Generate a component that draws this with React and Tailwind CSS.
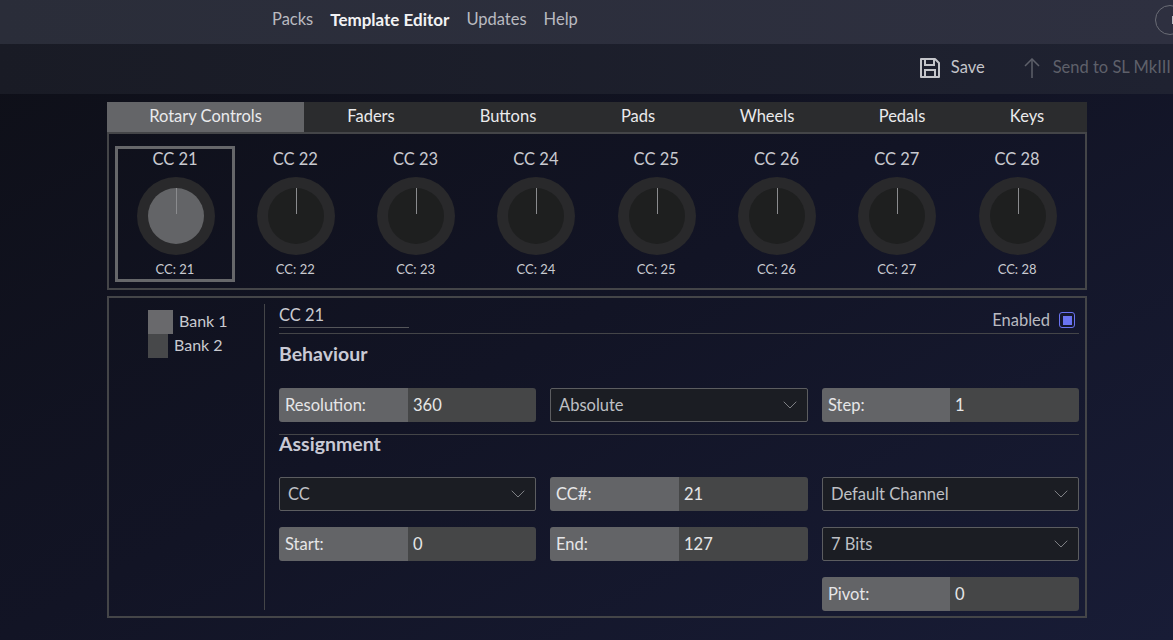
import { ChevronDown } from "lucide-react";

const tabs = [
  ["Rotary Controls", "w-[197px] bg-[#646568]"],
  ["Faders", "w-[134px]"],
  ["Buttons", "w-[140px]"],
  ["Pads", "w-[120px]"],
  ["Wheels", "w-[138px]"],
  ["Pedals", "w-[132px]"],
  ["Keys", "w-[118px]"],
];

const knobs = [21, 22, 23, 24, 25, 26, 27, 28];

function SaveIcon() {
  return (
    <svg width="20" height="20" viewBox="0 0 20 20" fill="none" stroke="#c4c5ca" strokeWidth="2">
      <path d="M1 1h14l4 4v14H1z" strokeLinejoin="round" />
      <path d="M5 1v6h9V1" />
      <path d="M5 19v-7h10v7" />
    </svg>
  );
}

function SendIcon() {
  return (
    <svg width="16" height="20" viewBox="0 0 16 20" fill="none" stroke="#5e606a" strokeWidth="1.5">
      <path d="M8 20V1" />
      <path d="M1 8l7-7 7 7" />
    </svg>
  );
}

function Knob({ cc, selected }) {
  return (
    <div
      className={
        "w-[120px] h-[136px] flex flex-col items-center border-[3px] " +
        (selected ? "border-[#66676a]" : "border-transparent")
      }
    >
      <div className="text-[16.5px] leading-5 text-[#c9cad0]">CC {cc}</div>
      <div className="mt-[8px] ml-[1px] w-[78px] h-[78px] rounded-full bg-[#29292b] flex items-center justify-center">
        <div
          className={
            "relative w-[56px] h-[56px] rounded-full " + (selected ? "bg-[#636467]" : "bg-[#1e1f1f]")
          }
        >
          <div className="absolute left-[28px] top-0 w-[1px] h-[26px] bg-[#8a8b8e]" />
        </div>
      </div>
      <div className="text-[13px] leading-4 mt-[6px] text-[#c9cad0]">CC: {cc}</div>
    </div>
  );
}

function Field({ label, value, labelWidth = "w-[129px]" }) {
  return (
    <div className="w-full h-[34px] flex rounded-[3px] overflow-hidden text-[16.5px] leading-[34px] text-[#e6e6e8]">
      <div className={labelWidth + " bg-[#636467] pl-[6px]"}>{label}</div>
      <div className="flex-1 bg-[#454647] pl-[5px]">{value}</div>
    </div>
  );
}

function Select({ value }) {
  return (
    <div className="w-full h-[34px] flex items-center justify-between pl-2 pr-[5px] rounded-[2px] border border-[#5c5d60] bg-[#1b1d23] text-[16.5px] text-[#bfc0c5]">
      <span>{value}</span>
      <ChevronDown size={24} strokeWidth={0.9} color="#8a8b90" />
    </div>
  );
}

export default function App() {
  return (
    <div className="w-[1173px] h-[640px] overflow-hidden bg-gradient-to-br from-[#0e0f17] via-[#121425] to-[#181c36] font-['Lato',sans-serif]">
      <div className="h-[44px] flex items-center pb-[5px] bg-gradient-to-r from-[#2a2d39] to-[#2e3040] pl-[272px] text-[16.5px] text-[#b9bac0]">
        <span>Packs</span>
        <span className="ml-[17px] text-[17px] font-bold text-[#f2f2f4]">Template Editor</span>
        <span className="ml-[17px]">Updates</span>
        <span className="ml-[17px]">Help</span>
        <div className="ml-auto -mr-[12px] w-[30px] h-[30px] rounded-full border border-[#6a6c75] flex items-center justify-end pr-[11px]">
          <div className="w-[1px] h-[8px] bg-[#b9bac0]" />
        </div>
      </div>
      <div className="h-[50px] flex items-center justify-end pb-[3px] bg-gradient-to-r from-[#191b25] to-[#1f2231] pr-[2px] text-[16.5px]">
        <SaveIcon />
        <span className="ml-[11px] text-[#c4c5ca]">Save</span>
        <div className="ml-[39px]">
          <SendIcon />
        </div>
        <span className="ml-[13px] text-[#5e606a]">Send to SL MkIII</span>
      </div>

      <div className="w-[980px] ml-[107px] mt-[8px]">
        <div className="flex h-[30px] bg-[#2b2c2e] text-[16.5px] leading-[28px] text-[#eaeaec]">
          {tabs.map(([name, cls]) => (
            <div key={name} className={"text-center " + cls}>
              {name}
            </div>
          ))}
        </div>

        <div className="h-[158px] border-2 border-[#444548] pl-[6px] pt-[12px] flex">
          {knobs.map((cc, i) => (
            <div key={cc} className="w-[120.3px]">
              <Knob cc={cc} selected={i === 0} />
            </div>
          ))}
        </div>

        <div className="mt-[6px] h-[322px] border-2 border-[#444548] flex py-[6px]">
          <div className="w-[156px] border-r border-[#444548] pl-[39px] pt-[6px] text-[16px] text-[#c9cad0]">
            <div className="flex h-[24px]">
              <div className="w-[25px] bg-[#69696c]" />
              <span className="ml-[6px] leading-[22px]">Bank 1</span>
            </div>
            <div className="flex h-[24px]">
              <div className="w-[20px] bg-[#47484a]" />
              <span className="ml-[6px] leading-[22px]">Bank 2</span>
            </div>
          </div>

          <div className="w-[800px] ml-[14px]">
            <div className="h-[30px] border-b border-[#444548] flex justify-between">
              <div className="w-[130px] h-[24px] border-b border-[#55565a] text-[16.5px] leading-[22px] text-[#c9cad0]">CC 21</div>
              <div className="flex items-center h-[32px] text-[16.5px] text-[#b9bac0]">
                <span>Enabled</span>
                <div className="ml-[9px] mr-[4px] w-[16px] h-[16px] rounded-[3px] border border-[#6a73f0] flex items-center justify-center">
                  <div className="w-[9px] h-[9px] bg-[#6a73f0]" />
                </div>
              </div>
            </div>
            <div className="mt-[8px] h-[24px] text-[19.5px] font-bold leading-6 text-[#c9cad5]">Behaviour</div>
            <div className="mt-[22px] grid grid-cols-[257px_258px_257px] gap-x-[14px]">
              <Field label="Resolution:" value="360" />
              <Select value="Absolute" />
              <Field label="Step:" value="1" labelWidth="w-[128px]" />
            </div>
            <div className="mt-[12px] border-t border-[#444548] text-[19.5px] font-bold leading-[18px] text-[#c9cad5]">Assignment</div>
            <div className="mt-[24px] grid grid-cols-[257px_258px_257px] gap-x-[14px] gap-y-[16px]">
              <Select value="CC" />
              <Field label="CC#:" value="21" />
              <Select value="Default Channel" />
              <Field label="Start:" value="0" />
              <Field label="End:" value="127" />
              <Select value="7 Bits" />
              <div />
              <div />
              <Field label="Pivot:" value="0" labelWidth="w-[128px]" />
            </div>
          </div>
        </div>
      </div>
    </div>
  );
}
